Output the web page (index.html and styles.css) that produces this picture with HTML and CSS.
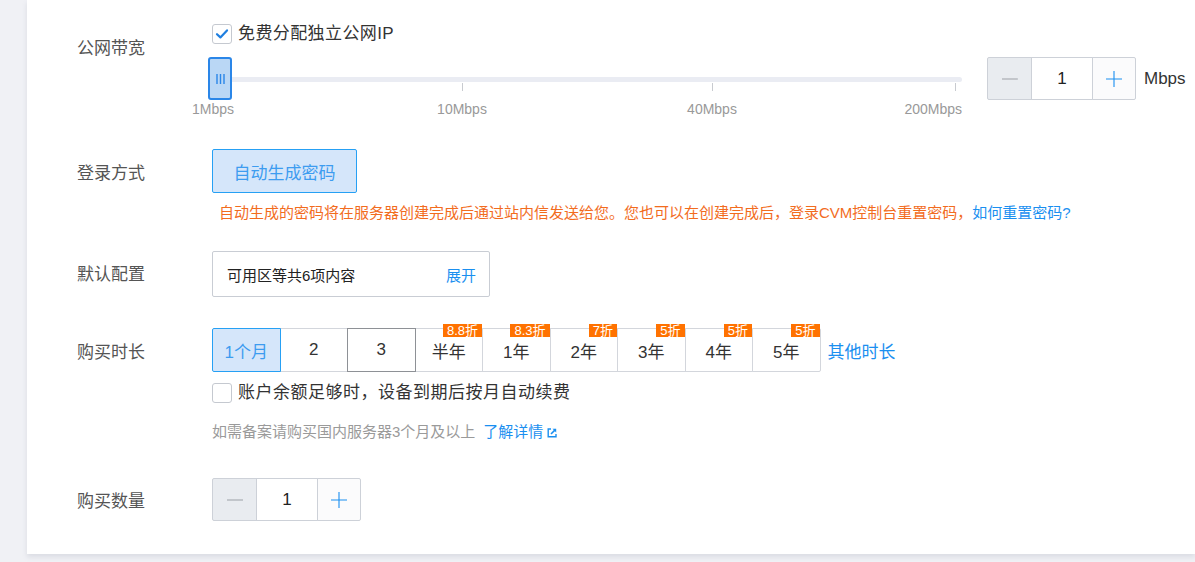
FILE: index.html
```html
<!DOCTYPE html>
<html lang="zh-CN">
<head>
<meta charset="utf-8">
<title>购买配置</title>
<link rel="stylesheet" href="styles.css">
</head>
<body>
<div class="page">
  <div class="side"></div>
  <div class="panel">
    <!-- 公网带宽 -->
    <div class="row">
      <div class="label label-r1">公网带宽</div>
      <div class="content">
        <label class="check-line">
          <span class="checkbox checked">
            <svg width="14" height="14" viewBox="0 0 14 14"><path d="M2 7.2 L5.4 10.4 L12 3.4" fill="none" stroke="#1f7fe0" stroke-width="2.2" stroke-linecap="round" stroke-linejoin="round"/></svg>
          </span>
          <span class="check-text wide">免费分配独立公网IP</span>
        </label>
        <div class="slider-line">
          <div class="slider">
            <div class="track"></div>
            <span class="tick" style="left:250px"></span>
            <span class="tick" style="left:500px"></span>
            <span class="tick" style="left:743px"></span>
            <div class="handle">
              <svg width="9" height="10" viewBox="0 0 9 10"><path d="M1 0V10M4.5 0V10M8 0V10" stroke="#2a86e8" stroke-width="1.4"/></svg>
            </div>
            <span class="tick-label" style="left:1px">1Mbps</span>
            <span class="tick-label" style="left:250px">10Mbps</span>
            <span class="tick-label" style="left:500px">40Mbps</span>
            <span class="tick-label tick-label-end">200Mbps</span>
          </div>
          <div class="stepper stepper-bw">
            <span class="step-btn minus"><svg width="16" height="2" viewBox="0 0 16 2"><path d="M0 1H16" stroke="#a9adb3" stroke-width="1.2"/></svg></span>
            <span class="step-val">1</span>
            <span class="step-btn plus"><svg width="16" height="16" viewBox="0 0 16 16"><path d="M0 8H16M8 0V16" stroke="#1a8ff0" stroke-width="1.1"/></svg></span>
          </div>
          <span class="unit">Mbps</span>
        </div>
      </div>
    </div>

    <!-- 登录方式 -->
    <div class="row row-login">
      <div class="label label-r2">登录方式</div>
      <div class="content">
        <div class="btn-selected">自动生成密码</div>
        <div class="hint">自动生成的密码将在服务器创建完成后通过站内信发送给您。您也可以在创建完成后，登录CVM控制台重置密码，<a class="link">如何重置密码?</a></div>
      </div>
    </div>

    <!-- 默认配置 -->
    <div class="row row-default">
      <div class="label label-r3">默认配置</div>
      <div class="content">
        <div class="collapse-box">
          <span>可用区等共6项内容</span>
          <a class="link">展开</a>
        </div>
      </div>
    </div>

    <!-- 购买时长 -->
    <div class="row row-duration">
      <div class="label label-r4">购买时长</div>
      <div class="content">
        <div class="tabs-line">
          <div class="tabs">
            <div class="tab first active">1个月</div>
            <div class="tab">2</div>
            <div class="tab hover">3</div>
            <div class="tab">半年<span class="badge">8.8折</span></div>
            <div class="tab">1年<span class="badge">8.3折</span></div>
            <div class="tab">2年<span class="badge">7折</span></div>
            <div class="tab">3年<span class="badge">5折</span></div>
            <div class="tab">4年<span class="badge">5折</span></div>
            <div class="tab last">5年<span class="badge">5折</span></div>
          </div>
          <a class="link other">其他时长</a>
        </div>
        <label class="check-line renew">
          <span class="checkbox"></span>
          <span class="check-text spaced">账户余额足够时，设备到期后按月自动续费</span>
        </label>
        <div class="note">如需备案请购买国内服务器3个月及以上<a class="link note-link">了解详情<svg class="ext" width="10" height="10" viewBox="0 0 10 10"><path d="M4 1H1.2V8.8H9V6" fill="none" stroke="#1a8ff0" stroke-width="1.4"/><path d="M5.5 0.8H9.2V4.5Z" fill="#1a8ff0"/><path d="M8.6 1.4L4 6" stroke="#1a8ff0" stroke-width="1.6"/></svg></a></div>
      </div>
    </div>

    <!-- 购买数量 -->
    <div class="row row-qty">
      <div class="label label-r5">购买数量</div>
      <div class="content">
        <div class="stepper">
          <span class="step-btn minus"><svg width="16" height="2" viewBox="0 0 16 2"><path d="M0 1H16" stroke="#a9adb3" stroke-width="1.2"/></svg></span>
          <span class="step-val">1</span>
          <span class="step-btn plus"><svg width="16" height="16" viewBox="0 0 16 16"><path d="M0 8H16M8 0V16" stroke="#1a8ff0" stroke-width="1.1"/></svg></span>
        </div>
      </div>
    </div>
  </div>
</div>
</body>
</html>
```

FILE: styles.css
```css
* { box-sizing: border-box; }
html, body {
  margin: 0;
  padding: 0;
}
body {
  background: #e7eaef;
  font-family: "Liberation Sans", "Noto Sans CJK SC", sans-serif;
  color: #333;
  width: 1195px;
  height: 562px;
  overflow: hidden;
}
.page {
  display: flex;
  align-items: flex-start;
  height: 562px;
  background: #f0f1f5;
}
.side {
  width: 27px;
  flex: none;
}
.panel {
  flex: 1;
  height: 554px;
  background: #fff;
  padding-top: 24px;
  box-shadow: 0 3px 5px rgba(120, 130, 150, 0.18);
}
.row {
  display: flex;
  align-items: flex-start;
}
.label {
  width: 185px;
  flex: none;
  padding-left: 50px;
  font-size: 17px;
  line-height: 20px;
  color: #555;
}
.label-r1 { padding-top: 15px; }
.label-r2 { padding-top: 15px; }
.label-r3 { padding-top: 14px; }
.label-r4 { padding-top: 15px; }
.label-r5 { padding-top: 14px; }
.content {
  flex: 1;
  display: flex;
  flex-direction: column;
  align-items: flex-start;
}

/* checkbox */
.check-line {
  display: flex;
  align-items: center;
  height: 20px;
  gap: 6px;
}
.checkbox {
  width: 20px;
  height: 20px;
  border: 1px solid #c5c9d0;
  border-radius: 3px;
  background: #fff;
  display: flex;
  align-items: center;
  justify-content: center;
}
.check-text {
  font-size: 17px;
  line-height: 20px;
  color: #333;
}
.check-text.wide { letter-spacing: 0.4px; }
.check-text.spaced { letter-spacing: 0.5px; }

/* slider */
.slider-line {
  display: flex;
  align-items: flex-start;
  margin-top: 13px;
}
.slider {
  position: relative;
  width: 750px;
  height: 61px;
  flex: none;
}
.track {
  position: absolute;
  left: 0;
  right: 0;
  top: 20px;
  height: 5px;
  border-radius: 3px;
  background: #eaecf3;
}
.tick {
  position: absolute;
  top: 26px;
  width: 1px;
  height: 8px;
  background: #c8cbd0;
}
.handle {
  position: absolute;
  left: -4px;
  top: 0;
  width: 24px;
  height: 43px;
  border: 2px solid #2a86e8;
  border-radius: 3px;
  background: #bad7f5;
  display: flex;
  align-items: center;
  justify-content: center;
}
.tick-label {
  position: absolute;
  top: 43px;
  transform: translateX(-50%);
  font-size: 14px;
  line-height: 18px;
  color: #999;
  white-space: nowrap;
}
.tick-label-end {
  left: auto;
  right: 0;
  transform: none;
}

/* stepper */
.stepper {
  display: flex;
  height: 43px;
}
.stepper-bw { margin-left: 25px; }
.step-btn, .step-val {
  border: 1px solid #cdd1d8;
  display: flex;
  align-items: center;
  justify-content: center;
  height: 43px;
}
.step-btn.minus {
  width: 45px;
  background: #e9ecf0;
  border-radius: 2px 0 0 2px;
}
.step-val {
  width: 62px;
  margin-left: -1px;
  font-size: 17px;
  color: #222;
  background: #fff;
}
.step-btn.plus {
  width: 44px;
  margin-left: -1px;
  background: #fbfbfc;
  border-radius: 0 2px 2px 0;
}
.unit {
  margin-left: 8px;
  font-size: 17px;
  line-height: 43px;
  color: #333;
}

/* login */
.row-login { margin-top: 31px; }
.btn-selected {
  width: 145px;
  height: 44px;
  border: 1px solid #26a0f4;
  border-radius: 2px;
  background: #d5e6fa;
  color: #3d9cf0;
  font-size: 17px;
  display: flex;
  align-items: center;
  justify-content: center;
}
.hint {
  margin-top: 10px;
  padding-left: 7px;
  font-size: 15px;
  line-height: 20px;
  color: #f26c1e;
  white-space: nowrap;
}
.link {
  color: #1a8ff0;
  text-decoration: none;
}

/* default config */
.row-default { margin-top: 28px; }
.collapse-box {
  width: 278px;
  height: 46px;
  border: 1px solid #c9cdd4;
  border-radius: 2px;
  display: flex;
  align-items: center;
  justify-content: space-between;
  padding: 0 13px 0 14px;
  font-size: 15px;
  color: #222;
}

/* duration */
.row-duration { margin-top: 31px; }
.tabs-line {
  display: flex;
  align-items: center;
}
.tabs {
  display: flex;
}
.tab {
  position: relative;
  width: 68.5px;
  height: 44px;
  border: 1px solid #d3d6dc;
  margin-left: -1px;
  display: flex;
  align-items: center;
  justify-content: center;
  font-size: 17px;
  color: #333;
  background: #fff;
}
.tab.first { margin-left: 0; border-radius: 2px 0 0 2px; }
.tab.last { border-radius: 0 2px 2px 0; }
.tab.active {
  z-index: 2;
  border-color: #26a0f4;
  background: #d5e6fa;
  color: #3d9cf0;
}
.tab.hover {
  z-index: 1;
  border-color: #8e9196;
}
.badge {
  position: absolute;
  top: -5px;
  right: 0;
  height: 13px;
  padding: 0 4px;
  background: #ff7200;
  color: #fff;
  font-size: 13px;
  line-height: 14px;
  white-space: nowrap;
}
.other {
  margin-left: 7px;
  font-size: 17px;
}
.renew { margin-top: 11px; }
.note {
  margin-top: 19px;
  font-size: 15px;
  line-height: 20px;
  color: #9a9a9a;
  display: flex;
  align-items: center;
}
.note-link {
  margin-left: 8px;
  font-size: 15px;
  display: flex;
  align-items: center;
}
.ext { margin-left: 4px; margin-top: 2px; }

/* quantity */
.row-qty { margin-top: 36px; }
```
